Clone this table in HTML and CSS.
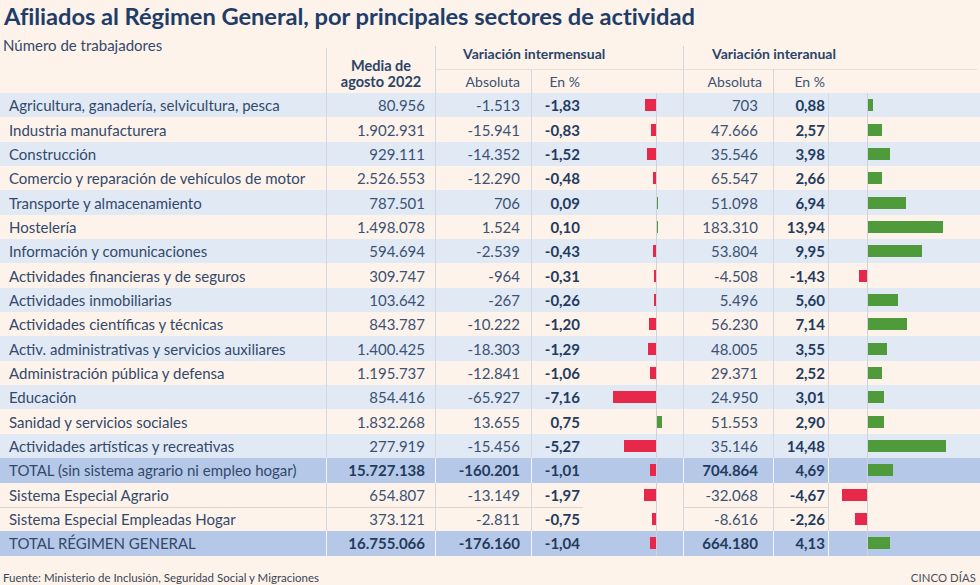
FILE: index.html
```html
<!DOCTYPE html>
<html lang="es">
<head>
<meta charset="utf-8">
<title>Afiliados al Régimen General</title>
<link rel="stylesheet" href="styles.css">
</head>
<body>
<div class="page">
  <h1 class="title">Afiliados al Régimen General, por principales sectores de actividad</h1>

  <div class="head">
    <div class="h-sub">Número de trabajadores</div>
    <div class="h-media">Media de<br>agosto 2022</div>
    <div class="h-group g1">Variación intermensual</div>
    <div class="h-group g2">Variación interanual</div>
    <div class="h-col c3">Absoluta</div>
    <div class="h-col c4">En %</div>
    <div class="h-col c5"></div>
    <div class="h-col c6">Absoluta</div>
    <div class="h-col c7">En %</div>
    <div class="h-col c8"></div>
  </div>

  <div class="rows">
    <div class="row alt"><div class="lbl">Agricultura, ganadería, selvicultura, pesca</div><div class="num">80.956</div><div class="num a1">-1.513</div><div class="pct">-1,83</div><div class="bars b1"><span class="l"><i class="neg" style="width:11px"></i></span><span class="ax"></span><span class="r"></span></div><div class="num a2">703</div><div class="pct">0,88</div><div class="bars b2"><span class="l"></span><span class="ax"></span><span class="r"><i class="pos" style="width:4.8px"></i></span></div></div>

    <div class="row"><div class="lbl">Industria manufacturera</div><div class="num">1.902.931</div><div class="num a1">-15.941</div><div class="pct">-0,83</div><div class="bars b1"><span class="l"><i class="neg" style="width:5px"></i></span><span class="ax"></span><span class="r"></span></div><div class="num a2">47.666</div><div class="pct">2,57</div><div class="bars b2"><span class="l"></span><span class="ax"></span><span class="r"><i class="pos" style="width:13.9px"></i></span></div></div>

    <div class="row alt"><div class="lbl">Construcción</div><div class="num">929.111</div><div class="num a1">-14.352</div><div class="pct">-1,52</div><div class="bars b1"><span class="l"><i class="neg" style="width:9.1px"></i></span><span class="ax"></span><span class="r"></span></div><div class="num a2">35.546</div><div class="pct">3,98</div><div class="bars b2"><span class="l"></span><span class="ax"></span><span class="r"><i class="pos" style="width:21.5px"></i></span></div></div>

    <div class="row"><div class="lbl">Comercio y reparación de vehículos de motor</div><div class="num">2.526.553</div><div class="num a1">-12.290</div><div class="pct">-0,48</div><div class="bars b1"><span class="l"><i class="neg" style="width:2.9px"></i></span><span class="ax"></span><span class="r"></span></div><div class="num a2">65.547</div><div class="pct">2,66</div><div class="bars b2"><span class="l"></span><span class="ax"></span><span class="r"><i class="pos" style="width:14.4px"></i></span></div></div>

    <div class="row alt"><div class="lbl">Transporte y almacenamiento</div><div class="num">787.501</div><div class="num a1">706</div><div class="pct">0,09</div><div class="bars b1"><span class="l"></span><span class="ax"></span><span class="r"><i class="pos" style="width:1px"></i></span></div><div class="num a2">51.098</div><div class="pct">6,94</div><div class="bars b2"><span class="l"></span><span class="ax"></span><span class="r"><i class="pos" style="width:37.5px"></i></span></div></div>

    <div class="row"><div class="lbl">Hostelería</div><div class="num">1.498.078</div><div class="num a1">1.524</div><div class="pct">0,10</div><div class="bars b1"><span class="l"></span><span class="ax"></span><span class="r"><i class="pos" style="width:1px"></i></span></div><div class="num a2">183.310</div><div class="pct">13,94</div><div class="bars b2"><span class="l"></span><span class="ax"></span><span class="r"><i class="pos" style="width:75.3px"></i></span></div></div>

    <div class="row alt"><div class="lbl">Información y comunicaciones</div><div class="num">594.694</div><div class="num a1">-2.539</div><div class="pct">-0,43</div><div class="bars b1"><span class="l"><i class="neg" style="width:2.6px"></i></span><span class="ax"></span><span class="r"></span></div><div class="num a2">53.804</div><div class="pct">9,95</div><div class="bars b2"><span class="l"></span><span class="ax"></span><span class="r"><i class="pos" style="width:53.7px"></i></span></div></div>

    <div class="row"><div class="lbl">Actividades financieras y de seguros</div><div class="num">309.747</div><div class="num a1">-964</div><div class="pct">-0,31</div><div class="bars b1"><span class="l"><i class="neg" style="width:1.9px"></i></span><span class="ax"></span><span class="r"></span></div><div class="num a2">-4.508</div><div class="pct">-1,43</div><div class="bars b2"><span class="l"><i class="neg" style="width:7.7px"></i></span><span class="ax"></span><span class="r"></span></div></div>

    <div class="row alt"><div class="lbl">Actividades inmobiliarias</div><div class="num">103.642</div><div class="num a1">-267</div><div class="pct">-0,26</div><div class="bars b1"><span class="l"><i class="neg" style="width:1.6px"></i></span><span class="ax"></span><span class="r"></span></div><div class="num a2">5.496</div><div class="pct">5,60</div><div class="bars b2"><span class="l"></span><span class="ax"></span><span class="r"><i class="pos" style="width:30.2px"></i></span></div></div>

    <div class="row"><div class="lbl">Actividades científicas y técnicas</div><div class="num">843.787</div><div class="num a1">-10.222</div><div class="pct">-1,20</div><div class="bars b1"><span class="l"><i class="neg" style="width:7.2px"></i></span><span class="ax"></span><span class="r"></span></div><div class="num a2">56.230</div><div class="pct">7,14</div><div class="bars b2"><span class="l"></span><span class="ax"></span><span class="r"><i class="pos" style="width:38.6px"></i></span></div></div>

    <div class="row alt"><div class="lbl">Activ. administrativas y servicios auxiliares</div><div class="num">1.400.425</div><div class="num a1">-18.303</div><div class="pct">-1,29</div><div class="bars b1"><span class="l"><i class="neg" style="width:7.7px"></i></span><span class="ax"></span><span class="r"></span></div><div class="num a2">48.005</div><div class="pct">3,55</div><div class="bars b2"><span class="l"></span><span class="ax"></span><span class="r"><i class="pos" style="width:19.2px"></i></span></div></div>

    <div class="row"><div class="lbl">Administración pública y defensa</div><div class="num">1.195.737</div><div class="num a1">-12.841</div><div class="pct">-1,06</div><div class="bars b1"><span class="l"><i class="neg" style="width:6.4px"></i></span><span class="ax"></span><span class="r"></span></div><div class="num a2">29.371</div><div class="pct">2,52</div><div class="bars b2"><span class="l"></span><span class="ax"></span><span class="r"><i class="pos" style="width:13.6px"></i></span></div></div>

    <div class="row alt"><div class="lbl">Educación</div><div class="num">854.416</div><div class="num a1">-65.927</div><div class="pct">-7,16</div><div class="bars b1"><span class="l"><i class="neg" style="width:43px"></i></span><span class="ax"></span><span class="r"></span></div><div class="num a2">24.950</div><div class="pct">3,01</div><div class="bars b2"><span class="l"></span><span class="ax"></span><span class="r"><i class="pos" style="width:16.3px"></i></span></div></div>

    <div class="row"><div class="lbl">Sanidad y servicios sociales</div><div class="num">1.832.268</div><div class="num a1">13.655</div><div class="pct">0,75</div><div class="bars b1"><span class="l"></span><span class="ax"></span><span class="r"><i class="pos" style="width:4.5px"></i></span></div><div class="num a2">51.553</div><div class="pct">2,90</div><div class="bars b2"><span class="l"></span><span class="ax"></span><span class="r"><i class="pos" style="width:15.7px"></i></span></div></div>

    <div class="row alt"><div class="lbl">Actividades artísticas y recreativas</div><div class="num">277.919</div><div class="num a1">-15.456</div><div class="pct">-5,27</div><div class="bars b1"><span class="l"><i class="neg" style="width:31.6px"></i></span><span class="ax"></span><span class="r"></span></div><div class="num a2">35.146</div><div class="pct">14,48</div><div class="bars b2"><span class="l"></span><span class="ax"></span><span class="r"><i class="pos" style="width:78.2px"></i></span></div></div>

    <div class="row total"><div class="lbl">TOTAL (sin sistema agrario ni empleo hogar)</div><div class="num">15.727.138</div><div class="num a1">-160.201</div><div class="pct">-1,01</div><div class="bars b1"><span class="l"><i class="neg" style="width:6.1px"></i></span><span class="ax"></span><span class="r"></span></div><div class="num a2">704.864</div><div class="pct">4,69</div><div class="bars b2"><span class="l"></span><span class="ax"></span><span class="r"><i class="pos" style="width:25.3px"></i></span></div></div>

    <div class="row"><div class="lbl">Sistema Especial Agrario</div><div class="num">654.807</div><div class="num a1">-13.149</div><div class="pct">-1,97</div><div class="bars b1"><span class="l"><i class="neg" style="width:11.8px"></i></span><span class="ax"></span><span class="r"></span></div><div class="num a2">-32.068</div><div class="pct">-4,67</div><div class="bars b2"><span class="l"><i class="neg" style="width:25.2px"></i></span><span class="ax"></span><span class="r"></span></div></div>

    <div class="row ruled"><div class="lbl">Sistema Especial Empleadas Hogar</div><div class="num">373.121</div><div class="num a1">-2.811</div><div class="pct">-0,75</div><div class="bars b1"><span class="l"><i class="neg" style="width:4.5px"></i></span><span class="ax"></span><span class="r"></span></div><div class="num a2">-8.616</div><div class="pct">-2,26</div><div class="bars b2"><span class="l"><i class="neg" style="width:12.2px"></i></span><span class="ax"></span><span class="r"></span></div></div>

    <div class="row total"><div class="lbl">TOTAL RÉGIMEN GENERAL</div><div class="num">16.755.066</div><div class="num a1">-176.160</div><div class="pct">-1,04</div><div class="bars b1"><span class="l"><i class="neg" style="width:6.2px"></i></span><span class="ax"></span><span class="r"></span></div><div class="num a2">664.180</div><div class="pct">4,13</div><div class="bars b2"><span class="l"></span><span class="ax"></span><span class="r"><i class="pos" style="width:22.3px"></i></span></div></div>
  </div>

  <div class="foot">
    <span class="src">Fuente: Ministerio de Inclusión, Seguridad Social y Migraciones</span>
    <span class="brand">CINCO DÍAS</span>
  </div>
</div>
</body>
</html>
```

FILE: styles.css
```css
* { box-sizing: border-box; }
html, body {
  margin: 0;
  padding: 0;
  background: #fdf3ea;
}
body {
  font-family: Lato, "Open Sans", sans-serif;
  color: #34496b;
}
.page {
  width: 980px;
  height: 585px;
  overflow: hidden;
}
.title {
  margin: 0;
  padding: 3px 0 0 4px;
  height: 36px;
  font-size: 23.7px;
  line-height: 26px;
  font-weight: 700;
  color: #1f3d69;
  letter-spacing: -0.05px;
  white-space: nowrap;
}

/* header */
.head {
  display: grid;
  grid-template-columns: 326px 109px 96px 52px 100px 90px 55px 152px;
  grid-template-rows: 12px 22px 23px;
  height: 57px;
}
.h-sub {
  grid-column: 1;
  grid-row: 1 / 4;
  padding-left: 3px;
  font-size: 15px;
  line-height: 18px;
  color: #34496b;
}
.h-media {
  grid-column: 2;
  grid-row: 2 / 4;
  border-left: 1px solid #d3d6dd;
  text-align: center;
  font-weight: 700;
  font-size: 14.5px;
  line-height: 16px;
  padding-top: 10px;
  color: #2b4468;
}
.h-group {
  grid-row: 2;
  border-left: 1px solid #d3d6dd;
  border-bottom: 1px solid #e6ded7;
  font-weight: 700;
  font-size: 14px;
  line-height: 16px;
  color: #2b4468;
  margin-top: -2px;
}
.g1 { grid-column: 3 / 6; padding-left: 27px; }
.g2 { grid-column: 6 / 9; padding-left: 28px; margin-right: 3px; }
.h-col {
  grid-row: 3;
  font-size: 14px;
  line-height: 24px;
  text-align: right;
  color: #3e5272;
}
.c3 { grid-column: 3; border-left: 1px solid #d3d6dd; padding-right: 11px; }
.c4 { grid-column: 4; border-left: 1px solid #d3d6dd; padding-right: 3px; }
.c5 { grid-column: 5; }
.c6 { grid-column: 6; border-left: 1px solid #d3d6dd; padding-right: 11px; }
.c7 { grid-column: 7; border-left: 1px solid #d3d6dd; padding-right: 3px; }
.c8 { grid-column: 8; }

/* data rows */
.rows {
  display: flex;
  flex-direction: column;
}
.row {
  display: grid;
  grid-template-columns: 326px 109px 96px 52px 100px 90px 55px 152px;
  height: 24.35px;
  background: #fdf3ea;
  --sep: #d5d8df;
}
.row.alt { background: #e1e9f5; }
.row.total { background: #b5c8e7; --sep: #f4f6fb; }
.row > div {
  display: flex;
  align-items: center;
  font-size: 15px;
  line-height: 18px;
}
.lbl {
  padding-left: 9px;
  color: #33496c;
  white-space: nowrap;
}
.num {
  justify-content: flex-end;
  border-left: 1px solid var(--sep);
  padding-right: 10px;
  color: #3c5274;
}
.num.a1 { padding-right: 11px; }
.num.a2 { padding-right: 15px; }
.pct {
  justify-content: flex-end;
  border-left: 1px solid var(--sep);
  padding-right: 3px;
  font-weight: 700;
  color: #233b5e;
}
.row.total .num {
  font-weight: 700;
  color: #233b5e;
}
.row.ruled > .lbl,
.row.ruled > .num,
.row.ruled > .pct {
  box-shadow: inset 0 1px 0 #ddd5ce;
}

/* bars */
.row > .bars {
  display: grid;
  align-items: stretch;
}
.b1 { grid-template-columns: 73px 1px 1fr; }
.b2 { grid-template-columns: 38px 1px 1fr; border-left: 1px solid var(--sep); }
.bars .l, .bars .r {
  display: flex;
  align-items: center;
}
.bars .l { justify-content: flex-end; }
.bars .ax { background: #cfd2da; }
.bars i {
  display: block;
  height: 12px;
  min-width: 1px;
}
.bars i.neg { background: #e8284b; }
.bars i.pos { background: #4f9a3b; }

/* footer */
.foot {
  display: flex;
  justify-content: space-between;
  align-items: center;
  padding: 14px 4px 0 3px;
  font-size: 11.5px;
  line-height: 16px;
}
.src { color: #3a4556; }
.brand { color: #4a4f58; font-size: 11.3px; letter-spacing: 0.1px; }
```
